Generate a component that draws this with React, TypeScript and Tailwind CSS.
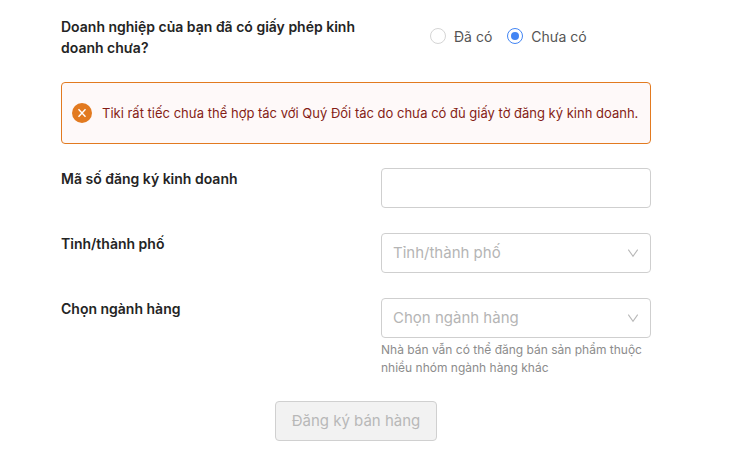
import { useState } from "react";
import type { ReactNode } from "react";

const controlBox = "h-10 w-full rounded border border-[#cfcfcf] bg-white px-[11px] text-[15px] outline-none";

function Row({ label, htmlFor, children }: { label: string; htmlFor: string; children: ReactNode }) {
  return (
    <div className="grid grid-cols-[32fr_27fr]">
      <label htmlFor={htmlFor} className="text-sm leading-[21px] font-semibold text-[#242424]">
        {label}
      </label>
      <div>{children}</div>
    </div>
  );
}

function SelectBox({ id, placeholder, options }: { id: string; placeholder: string; options: string[] }) {
  return (
    <div className="relative">
      <select id={id} defaultValue="" className={`${controlBox} appearance-none text-[#b5b5b5]`}>
        <option value="">{placeholder}</option>
        {options.map((option) => (
          <option key={option}>{option}</option>
        ))}
      </select>
      <svg
        viewBox="0 0 12 12"
        className="pointer-events-none absolute top-1/2 right-3 size-3 -translate-y-1/2"
        fill="none"
        stroke="#b8b8b8"
        strokeWidth="1.1"
      >
        <path d="M1.3 2.6 6 9.2l4.7-6.6" />
      </svg>
    </div>
  );
}

function Radio({ label, checked, onSelect }: { label: string; checked: boolean; onSelect: () => void }) {
  return (
    <label className="flex items-center gap-2 text-sm leading-[21px] text-[#555555]">
      <input
        type="radio"
        name="license"
        checked={checked}
        onChange={onSelect}
        className="grid size-4 appearance-none place-items-center rounded-full border border-[#d5d5d5] bg-white before:size-2 before:rounded-full checked:border-[#4285f4] checked:before:bg-[#4285f4]"
      />
      {label}
    </label>
  );
}

export default function App() {
  const [licensed, setLicensed] = useState(false);

  return (
    <form className="bg-white pt-4 pr-20 pb-6 pl-[61px] font-[Inter,'Noto_Sans',sans-serif]">
      <fieldset>
        <div className="grid grid-cols-[32fr_27fr]">
          <legend className="pr-4 text-sm leading-[21px] font-semibold text-[#242424]">
            Doanh nghiệp của bạn đã có giấy phép kinh doanh chưa?
          </legend>
          <div className="flex h-10 items-center gap-[15px] pl-[49px]">
            <Radio label="Đã có" checked={licensed} onSelect={() => setLicensed(true)} />
            <Radio label="Chưa có" checked={!licensed} onSelect={() => setLicensed(false)} />
          </div>
        </div>
      </fieldset>

      <div role="alert" className="mt-6 flex items-center gap-2.5 rounded border border-[#e27a20] bg-[#fef9f9] px-2.5 py-5">
        <svg viewBox="0 0 20 20" className="size-5 shrink-0">
          <circle cx="10" cy="10" r="10" fill="#e27a20" />
          <path d="m6.5 6.3 7 7.4m0-7.4-7 7.4" stroke="#fff" strokeWidth="1.4" />
        </svg>
        <p className="text-[13px] leading-5 text-[#851d16]">
          Tiki rất tiếc chưa thể hợp tác với Quý Đối tác do chưa có đủ giấy tờ đăng ký kinh doanh.
        </p>
      </div>

      <div className="mt-6 flex flex-col gap-[25px]">
        <Row label="Mã số đăng ký kinh doanh" htmlFor="business-code">
          <input id="business-code" type="text" className={`${controlBox} block text-[#242424]`} />
        </Row>
        <Row label="Tỉnh/thành phố" htmlFor="province">
          <SelectBox id="province" placeholder="Tỉnh/thành phố" options={[]} />
        </Row>
        <Row label="Chọn ngành hàng" htmlFor="category">
          <SelectBox id="category" placeholder="Chọn ngành hàng" options={[]} />
          <p className="mt-[3px] text-xs leading-[18px] text-[#8c8c8c]">
            Nhà bán vẫn có thể đăng bán sản phẩm thuộc nhiều nhóm ngành hàng khác
          </p>
        </Row>
      </div>

      <div className="mt-6 flex justify-center">
        <button type="submit" disabled className="h-10 rounded border border-[#d0d0d0] bg-[#f2f2f2] px-4 text-[15px] text-[#b8b8b8]">
          Đăng ký bán hàng
        </button>
      </div>
    </form>
  );
}
